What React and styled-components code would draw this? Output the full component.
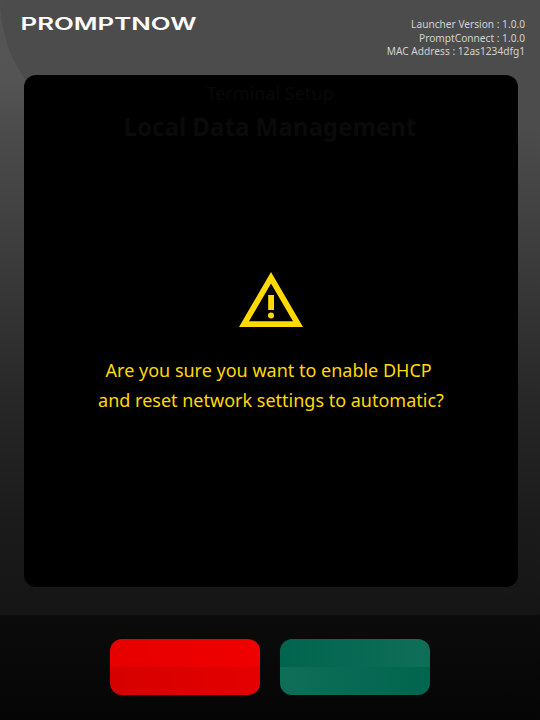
import React from "react";
import styled, { createGlobalStyle } from "styled-components";

const GlobalStyle = createGlobalStyle`
  * { box-sizing: border-box; }
  body { margin: 0; background: #000; }
`;

const Screen = styled.main`
  position: relative;
  display: flex;
  flex-direction: column;
  width: 540px;
  height: 720px;
  overflow: hidden;
  background: linear-gradient(
    180deg,
    #555 0,
    #545454 80px,
    #4c4c4c 125px,
    #3e3e3e 240px,
    #272727 400px,
    #1b1b1b 520px,
    #151515 615px
  );
  font-family: "Noto Sans", sans-serif;
`;

const Backdrop = styled.div`
  position: absolute;
  left: 0;
  top: -125px;
  width: 760px;
  height: 250px;
  border-radius: 110px / 125px;
  background: linear-gradient(180deg, #4c4c4c 50%, #4c4c4c);
`;

const Header = styled.header`
  position: relative;
  display: flex;
  justify-content: space-between;
  height: 75px;
  padding: 16px 15px 0 21px;
`;

const Logo = styled.svg`
  display: block;
  width: 178px;
  height: 18px;
  overflow: visible;
`;

const LogoText = styled.text`
  fill: #fff;
  font-family: Inter, sans-serif;
  font-size: 17px;
  font-weight: 600;
`;

const DeviceInfo = styled.div`
  padding-top: 2px;
  color: #d2d2d2;
  font-size: 10.16px;
  line-height: 13.5px;
  text-align: right;
`;

const Panel = styled.section`
  position: relative;
  display: flex;
  flex-direction: column;
  align-items: center;
  width: 494px;
  height: 512px;
  margin-left: 24px;
  border-radius: 12px;
  background: #000;
`;

const Subtitle = styled.div`
  margin-top: 5px;
  margin-right: 2px;
  color: #090909;
  font-size: 18px;
  line-height: 26px;
`;

const Title = styled.h1`
  margin: 3px 2px 0 0;
  color: #0a0a0a;
  font-size: 24.1px;
  font-weight: 700;
  line-height: 35px;
`;

const WarningIcon = styled.svg`
  width: 64px;
  height: 55px;
  margin-top: 128px;
`;

const Message = styled.p`
  margin: 28px 0 0;
  color: #ffd900;
  font-size: 18px;
  line-height: 30px;
  text-align: center;
`;

const Footer = styled.footer`
  display: flex;
  justify-content: center;
  gap: 20px;
  height: 105px;
  margin-top: 28px;
  padding-top: 24.4px;
  background: linear-gradient(#0b0b0b, #050505);
`;

const Action = styled.button`
  width: 150px;
  height: 56px;
  padding: 0;
  border: 0;
  border-radius: 12px;
  background:
    linear-gradient(90deg, ${({ $top }) => $top}) top / 100% 50% no-repeat,
    linear-gradient(90deg, ${({ $bottom }) => $bottom});
`;

export default function App() {
  return (
    <>
      <GlobalStyle />
      <Screen>
        <Backdrop />
        <Header>
          <Logo viewBox="0 0 178 18" aria-label="PROMPTNOW">
            <LogoText x="-0.5" y="13.8" textLength="176" lengthAdjust="spacingAndGlyphs">PROMPTNOW</LogoText>
          </Logo>
          <DeviceInfo>
            <div>Launcher Version : 1.0.0</div>
            <div>PromptConnect : 1.0.0</div>
            <div>MAC Address : 12as1234dfg1</div>
          </DeviceInfo>
        </Header>
        <Panel>
          <Subtitle>Terminal Setup</Subtitle>
          <Title>Local Data Management</Title>
          <WarningIcon viewBox="0 0 64 55">
            <path fill="#ffd900" fillRule="evenodd" d="M32 0 64 55H0ZM32 11.5 10 49.3H54Z" />
            <rect x="29.2" y="23" width="5.8" height="15" fill="#ffd900" />
            <circle cx="32" cy="43.5" r="3" fill="#ffd900" />
          </WarningIcon>
          <Message>
            Are you sure you want to enable DHCP&nbsp;
            <br />
            and reset network settings to automatic?
          </Message>
        </Panel>
        <Footer>
          <Action aria-label="Cancel" $top="#e60000, #f00000" $bottom="#d60000, #e40000" />
          <Action aria-label="Confirm" $top="#00654e, #0f6e58" $bottom="#0f6e58, #00654e" />
        </Footer>
      </Screen>
    </>
  );
}
